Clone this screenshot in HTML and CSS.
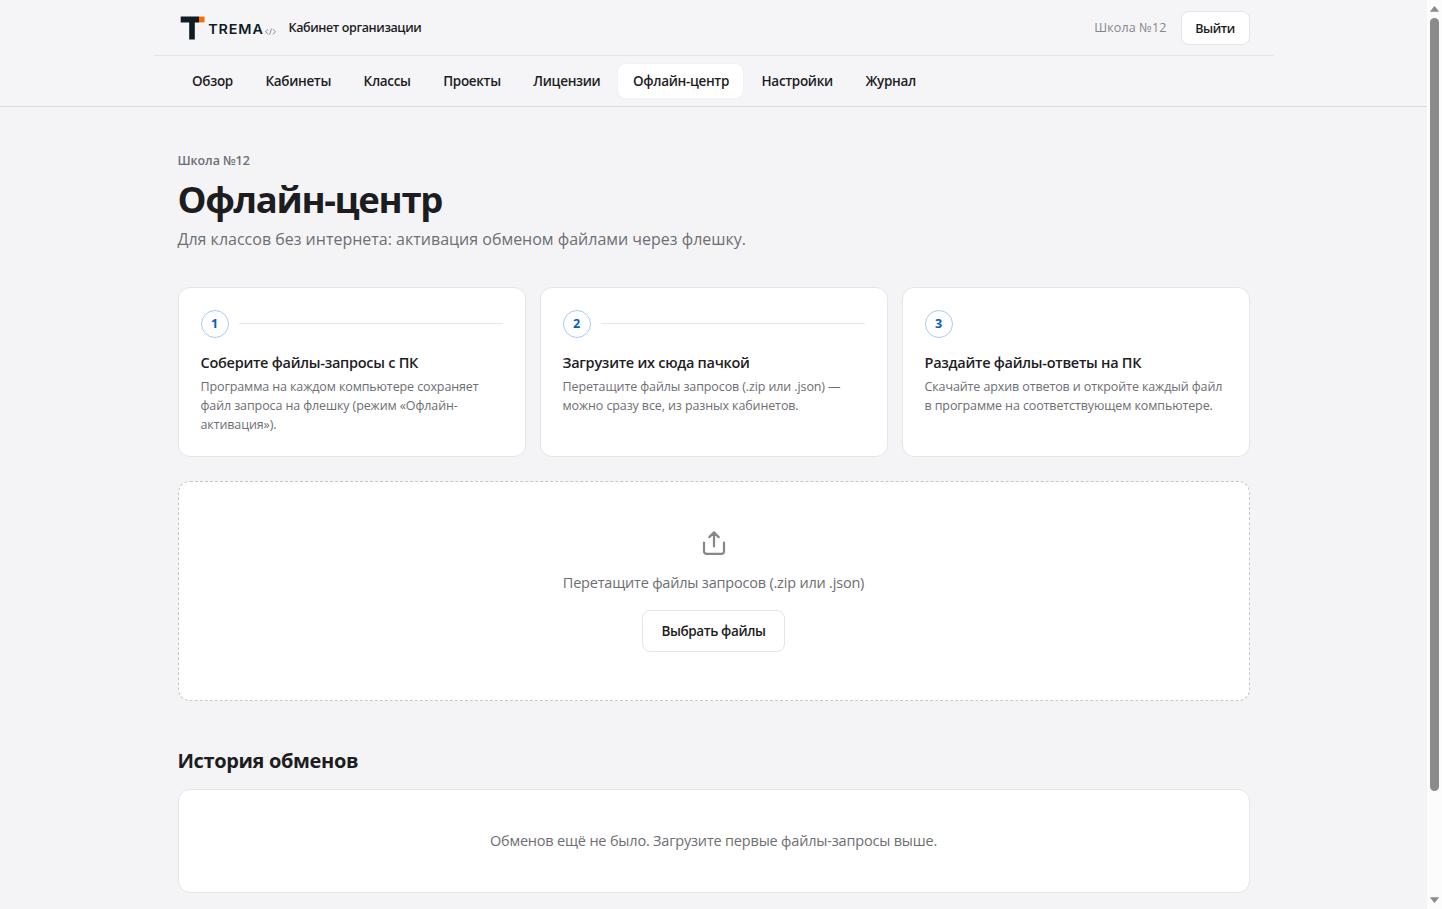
FILE: index.html
```html
<!DOCTYPE html>
<html lang="ru">
  <head>
    <meta charset="UTF-8" />
    <meta name="viewport" content="width=device-width, initial-scale=1.0" />
    <title>Офлайн-центр</title>
    <link rel="stylesheet" href="styles.css">
  </head>
  <body>
    <div class="page">
      <header class="header">
        <div class="topbar">
          <svg class="logo" width="98" height="30" viewBox="0 0 98 30">
            <path d="M2.7 3.6h18.3v5.8h-4.2v17.2h-5.6V9.4H2.7z" fill="#101c24" />
            <path d="M21 3.6h5.5v5.8h-5.5z" fill="#ff6a00" />
            <text class="logo-name" x="30.2" y="21.4" textLength="55.5" lengthAdjust="spacingAndGlyphs">TREMA</text>
            <path d="M90.2 16.2l-2.8 2.5 2.8 2.5M94.8 16.2l2.8 2.5-2.8 2.5M93.5 15.6l-1.9 6.2" fill="none" stroke="#8f959c" stroke-width="1" />
          </svg>
          <span class="product">Кабинет организации</span>
          <span class="org">Школа №12</span>
          <button class="logout">Выйти</button>
        </div>
        <nav class="nav">
          <a href="#">Обзор</a>
          <a href="#">Кабинеты</a>
          <a href="#">Классы</a>
          <a href="#">Проекты</a>
          <a href="#">Лицензии</a>
          <a href="#" class="active">Офлайн-центр</a>
          <a href="#">Настройки</a>
          <a href="#">Журнал</a>
        </nav>
      </header>

      <main class="main">
        <p class="eyebrow">Школа №12</p>
        <h1>Офлайн-центр</h1>
        <p class="lead">Для классов без интернета: активация обменом файлами через флешку.</p>

        <div class="steps">
          <section class="step">
            <div class="step-head"><span class="num">1</span><span class="line"></span></div>
            <h3>Соберите файлы-запросы с ПК</h3>
            <p>Программа на каждом компьютере сохраняет файл запроса на флешку (режим «Офлайн-активация»).</p>
          </section>
          <section class="step">
            <div class="step-head"><span class="num">2</span><span class="line"></span></div>
            <h3>Загрузите их сюда пачкой</h3>
            <p>Перетащите файлы запросов (.zip или .json) — можно сразу все, из разных кабинетов.</p>
          </section>
          <section class="step">
            <div class="step-head"><span class="num">3</span></div>
            <h3>Раздайте файлы-ответы на ПК</h3>
            <p>Скачайте архив ответов и откройте каждый файл в программе на соответствующем компьютере.</p>
          </section>
        </div>

        <div class="dropzone">
          <svg width="28" height="28" viewBox="0 0 28 28" fill="none" stroke="#86868b" stroke-width="2.2" stroke-linecap="round" stroke-linejoin="round">
            <path d="M14 17.5V3.5M9.3 8.1L14 3.4l4.7 4.7M4 13.5v8.8a2.6 2.6 0 0 0 2.6 2.6h14.8a2.6 2.6 0 0 0 2.6-2.6v-8.8" />
          </svg>
          <p>Перетащите файлы запросов (.zip или .json)</p>
          <button class="pick">Выбрать файлы</button>
        </div>

        <h2>История обменов</h2>
        <div class="empty">Обменов ещё не было. Загрузите первые файлы-запросы выше.</div>
      </main>
    </div>

    <div class="scrollbar">
      <svg width="9" height="6" viewBox="0 0 9 6"><path d="M4.5 0.3L8.6 5.4H0.4z" fill="#8b8b8b" stroke="#8b8b8b" stroke-width="0.6" stroke-linejoin="round" /></svg>
      <div class="thumb"></div>
      <svg width="9" height="6" viewBox="0 0 9 6"><path d="M4.5 5.7L8.6 0.6H0.4z" fill="#8b8b8b" stroke="#8b8b8b" stroke-width="0.6" stroke-linejoin="round" /></svg>
    </div>
  </body>
</html>
```

FILE: styles.css
```css
* {
  box-sizing: border-box;
}
body {
  margin: 0;
  height: 909px;
  display: flex;
  overflow: hidden;
  background: #f4f4f7;
  color: #1d1d1f;
  font-family: "Segoe UI", "Open Sans", "Noto Sans", sans-serif;
}
h1, h2, h3, p {
  margin: 0;
}
button {
  font-family: inherit;
  font-weight: 600;
  letter-spacing: -0.4px;
  color: #1d1d1f;
  background: #fff;
  border: 1px solid #e5e5e7;
  padding: 0;
}
.page {
  flex: 1;
}
.header {
  height: 107px;
  background: #f5f5f8;
  border-bottom: 1px solid #dadadd;
}
.topbar {
  width: 1120px;
  height: 56px;
  margin: 0 auto;
  padding: 0 24px;
  display: flex;
  align-items: center;
  border-bottom: 1px solid #e5e5e8;
}
.logo {
  margin-right: 13px;
}
.logo-name {
  font-family: "Inter", sans-serif;
  font-size: 13.2px;
  font-weight: 600;
  letter-spacing: 0.8px;
  fill: #101c24;
}
.product {
  font-size: 12.5px;
  font-weight: 600;
  letter-spacing: -0.38px;
}
.org {
  margin-left: auto;
  font-size: 12.5px;
  letter-spacing: 0.12px;
  color: #86868b;
}
.logout {
  width: 69px;
  height: 34px;
  margin-left: 14px;
  padding-top: 1px;
  border-radius: 8px;
  font-size: 12.5px;
}
.nav {
  width: 1120px;
  margin: 0 auto;
  padding: 8px 24px;
  display: flex;
  gap: 4px;
}
.nav a {
  height: 34px;
  padding: 0 14px 0 14.5px;
  border-radius: 7px;
  line-height: 34px;
  font-size: 13.5px;
  font-weight: 600;
  letter-spacing: -0.32px;
  color: #1d1d1f;
  text-decoration: none;
}
.nav .active {
  background: #fff;
  box-shadow: 0 0 1px rgba(0, 0, 0, 0.12);
}
.main {
  width: 1120px;
  margin: 0 auto;
  padding: 44px 24px 0;
}
.eyebrow {
  font-size: 12.5px;
  line-height: 19px;
  font-weight: 600;
  letter-spacing: -0.1px;
  color: #6e6e73;
}
h1 {
  margin-top: 6px;
  font-size: 36.5px;
  line-height: 46px;
  font-weight: 700;
  letter-spacing: -1.35px;
}
.lead {
  margin-top: 4px;
  font-size: 16px;
  line-height: 26px;
  color: #6e6e73;
}
.steps {
  margin-top: 35px;
  display: grid;
  grid-template-columns: repeat(3, 1fr);
  gap: 14px;
}
.step {
  height: 170px;
  padding: 22px;
  background: #fff;
  border: 1px solid #e5e5e7;
  border-radius: 12px;
}
.step-head {
  display: flex;
  align-items: center;
  gap: 10px;
}
.num {
  width: 28px;
  height: 28px;
  border: 1px solid #a9cbef;
  border-radius: 50%;
  text-align: center;
  line-height: 26px;
  font-size: 12.5px;
  font-weight: 700;
  color: #0060c0;
}
.line {
  flex: 1;
  height: 1px;
  margin-bottom: 1px;
  background: #e8e8ea;
}
.step h3 {
  margin-top: 14px;
  font-size: 14.5px;
  line-height: 22px;
  font-weight: 600;
  letter-spacing: -0.27px;
}
.step p {
  margin-top: 3px;
  font-size: 12.5px;
  line-height: 19px;
  letter-spacing: -0.11px;
  color: #6e6e73;
}
.dropzone {
  height: 220px;
  margin-top: 24px;
  padding-top: 47px;
  display: flex;
  flex-direction: column;
  align-items: center;
  background: #fff;
  border: 1px dashed #c7c7ca;
  border-radius: 12px;
}
.dropzone p {
  margin: 14px 0 16px;
  font-size: 14.5px;
  line-height: 23px;
  letter-spacing: -0.2px;
  color: #6e6e73;
}
.pick {
  width: 143px;
  height: 42px;
  border-radius: 8px;
  font-size: 13.5px;
}
h2 {
  margin-top: 46px;
  font-size: 20px;
  line-height: 28px;
  font-weight: 700;
  letter-spacing: -0.36px;
}
.empty {
  height: 104px;
  margin-top: 14px;
  line-height: 102px;
  text-align: center;
  font-size: 14.5px;
  letter-spacing: -0.19px;
  color: #6e6e73;
  background: #fff;
  border: 1px solid #e5e5e7;
  border-radius: 12px;
}
.scrollbar {
  width: 15px;
  padding: 6px 0;
  display: flex;
  flex-direction: column;
  align-items: center;
  background: #fcfcfc;
}
.thumb {
  width: 9px;
  height: 773px;
  margin: 6px 0 auto;
  border-radius: 5px;
  background: #8b8b8b;
}
```
